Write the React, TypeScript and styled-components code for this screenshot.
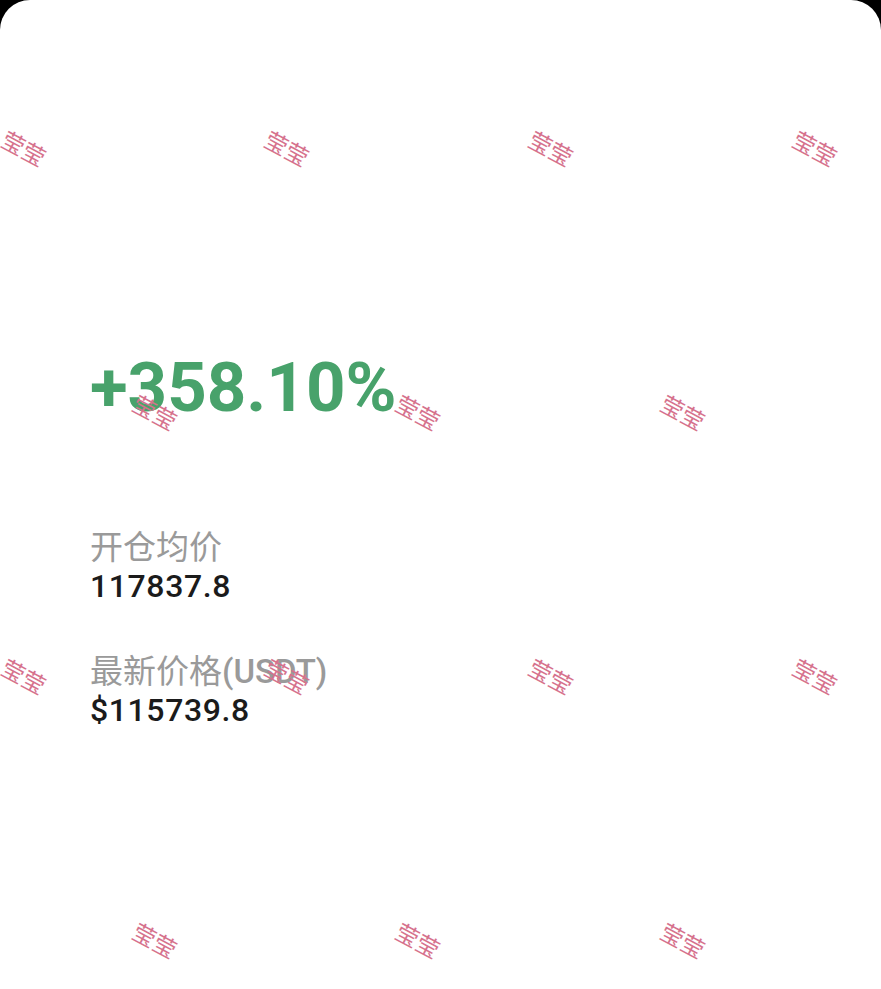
import React from "react";
import styled, { createGlobalStyle } from "styled-components";

const GlobalStyle = createGlobalStyle`
  html, body {
    margin: 0;
    padding: 0;
    background: #000;
  }
  #root {
    width: 881px;
    height: 989px;
    overflow: hidden;
  }
`;

const Card = styled.main`
  position: relative;
  width: 881px;
  height: 989px;
  box-sizing: border-box;
  background: #fff;
  border-radius: 30px 30px 0 0;
  overflow: hidden;
  padding: 353px 0 0 90px;
  display: flex;
  flex-direction: column;
  font-family: Roboto, "Noto Sans CJK SC", sans-serif;
`;

const Profit = styled.div`
  font-size: 69px;
  line-height: 69px;
  font-weight: 700;
  color: #48a26b;
  margin-bottom: 107px;
`;

const InfoGroup = styled.section<{ $gap: number }>`
  display: flex;
  flex-direction: column;
  margin-bottom: ${(p) => p.$gap}px;
`;

const Label = styled.div`
  font-size: 33px;
  line-height: 38px;
  color: #9a9a9a;
  font-weight: 400;
`;

const Unit = styled.span`
  font-weight: 500;
`;

const Value = styled.div`
  font-size: 32px;
  line-height: 38px;
  color: #1b1b1b;
  font-weight: 500;
  letter-spacing: 0.6px;
`;

const Watermark = styled.span<{ $x: number; $y: number }>`
  position: absolute;
  left: ${(p) => p.$x}px;
  top: ${(p) => p.$y}px;
  transform: translate(-50%, -50%) rotate(28deg);
  font-family: "Noto Sans CJK SC", sans-serif;
  font-size: 23px;
  line-height: 1;
  color: #d6728d;
  white-space: nowrap;
  pointer-events: none;
`;

const marks: Array<[number, number]> = [
  [24, 148], [287, 148], [551, 148], [815, 148],
  [155, 412], [418, 412], [683, 412],
  [24, 676], [287, 676], [551, 676], [815, 676],
  [155, 940], [418, 940], [683, 940],
];

export default function App() {
  return (
    <>
      <GlobalStyle />
      <Card>
        <Profit>+358.10%</Profit>
        <InfoGroup $gap={48}>
          <Label>开仓均价</Label>
          <Value>117837.8</Value>
        </InfoGroup>
        <InfoGroup $gap={0}>
          <Label>
            最新价格<Unit>(USDT)</Unit>
          </Label>
          <Value>$115739.8</Value>
        </InfoGroup>
        {marks.map(([x, y], i) => (
          <Watermark key={i} $x={x} $y={y}>
            莹莹
          </Watermark>
        ))}
      </Card>
    </>
  );
}
